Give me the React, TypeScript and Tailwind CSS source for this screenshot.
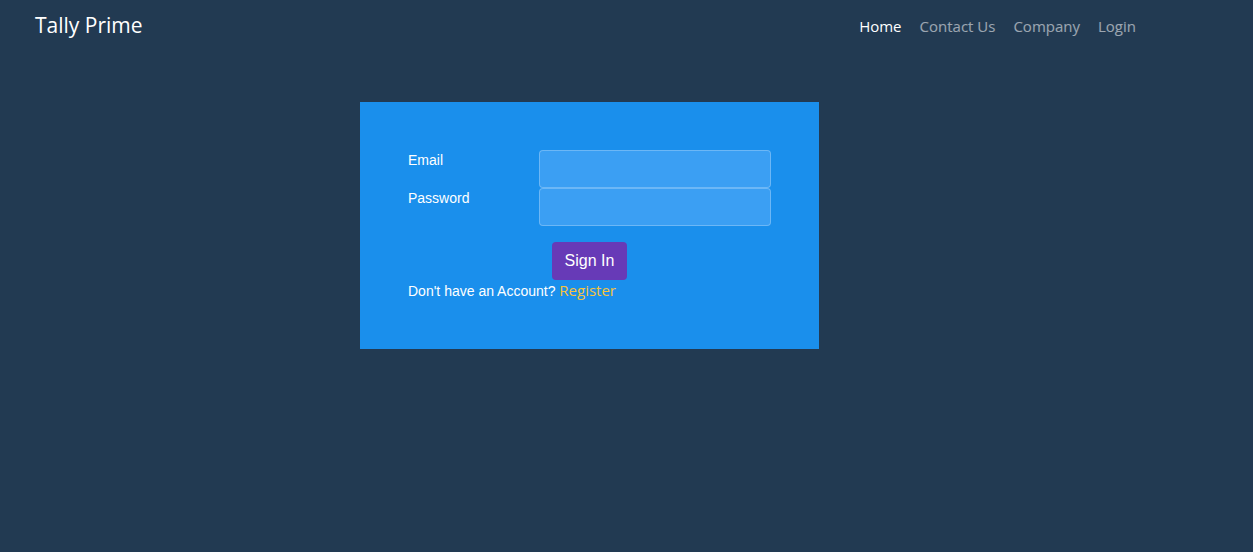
import React from "react";

export default function App() {
  return (
    <div className="min-h-[552px] bg-[#223a52] font-['Liberation_Sans',Arial,sans-serif]">
      {/* Navbar */}
      <nav className="flex items-center justify-between h-[52px] pl-[35px] pr-[117px] font-['Open_Sans',sans-serif]">
        <span className="text-[21px] text-white">Tally Prime</span>
        <ul className="flex items-center gap-[18px] text-[15px]">
          <li className="text-white">Home</li>
          <li className="text-white/55">Contact Us</li>
          <li className="text-white/55">Company</li>
          <li className="text-white/55">Login</li>
        </ul>
      </nav>

      {/* Login card */}
      <div className="flex justify-center pt-[50px]">
        <form className="w-[459px] h-[247px] bg-[#1a8fec] px-12 pt-12 ml-[-74px]">
          <div className="flex">
            <label className="w-[131px] text-[14px] text-white">Email</label>
            <input
              type="email"
              className="w-[232px] h-[38px] rounded-[4px] bg-[#3b9ff3] border border-white/25 outline-none"
            />
          </div>
          <div className="flex">
            <label className="w-[131px] text-[14px] text-white">Password</label>
            <input
              type="password"
              className="w-[232px] h-[38px] rounded-[4px] bg-[#3b9ff3] border border-white/25 outline-none"
            />
          </div>
          <div className="flex justify-center mt-4">
            <button
              type="button"
              className="w-[75px] h-[38px] rounded-[4px] bg-[#673ab7] text-white text-[16px]"
            >
              Sign In
            </button>
          </div>
          <p className="text-[14px] text-white leading-5">
            Don't have an Account?{" "}
            <a className="text-[#f7c33c] text-[15px] font-['Open_Sans',sans-serif]">Register</a>
          </p>
        </form>
      </div>
    </div>
  );
}
